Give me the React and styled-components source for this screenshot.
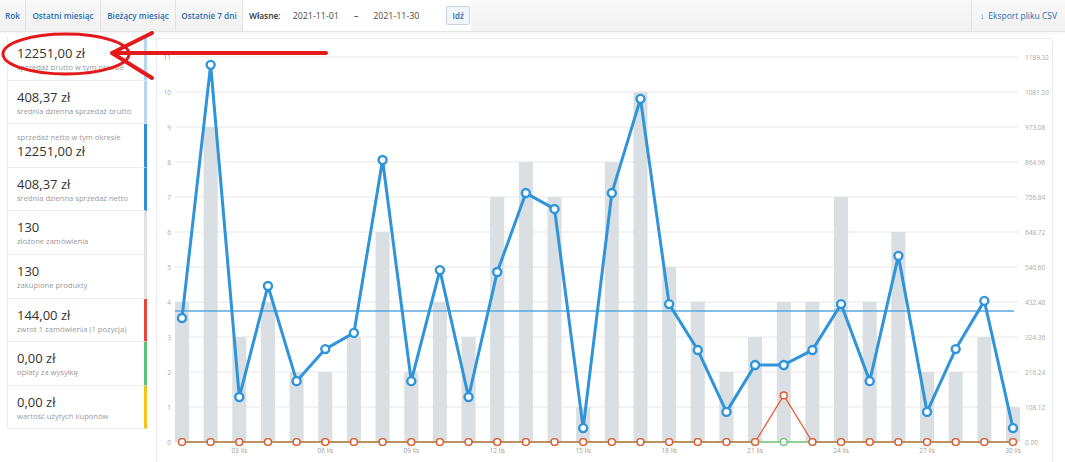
import styled, { createGlobalStyle } from "styled-components";

const GlobalStyle = createGlobalStyle`
  html, body {
    margin: 0;
    padding: 0;
    background: #fff;
    font-family: "Open Sans", "Liberation Sans", sans-serif;
  }
  * { box-sizing: border-box; }
`;

const Page = styled.div`
  position: relative;
  width: 1065px;
  height: 462px;
  overflow: hidden;
`;

const Toolbar = styled.div`
  display: flex;
  align-items: stretch;
  height: 32px;
  background: linear-gradient(#f9f9f9, #f1f1f1);
  border-bottom: 1px solid #e3e3e3;
  box-shadow: 0 1px 2px rgba(0, 0, 0, 0.05);
`;

const Tab = styled.button`
  display: flex;
  align-items: center;
  flex-shrink: 0;
  width: ${(p) => p.$w}px;
  justify-content: center;
  padding: 0;
  border: 0;
  border-right: 1px solid #e2e2e2;
  background: transparent;
  color: #2b6cb3;
  font-family: "Open Sans", sans-serif;
  font-size: 8.2px;
  font-weight: 600;
  white-space: nowrap;
  cursor: pointer;
`;

const Custom = styled.div`
  display: flex;
  align-items: center;
  flex-shrink: 0;
  width: 228px;
  padding: 0 6px;
  background: #fff;
  font-size: 8.4px;
  color: #444;
  white-space: nowrap;
`;

const CustomLabel = styled.span`
  font-weight: 600;
  color: #333;
  margin-right: 12px;
`;

const DateText = styled.span`
  color: #4a4a4a;
  font-size: 8.9px;
`;

const Dash = styled.span`
  margin: 0 15px 0 15px;
  font-weight: 600;
`;

const GoButton = styled.button`
  margin-left: 27px;
  height: 19px;
  padding: 0 5px;
  border: 1px solid #c5d3e2;
  border-radius: 2px;
  background: #f3f6f9;
  color: #2b6cb3;
  font-family: "Open Sans", sans-serif;
  font-size: 8px;
  font-weight: 600;
`;

const Spacer = styled.div`
  flex: 1;
`;

const Export = styled.div`
  display: flex;
  align-items: center;
  gap: 4px;
  padding-left: 8px;
  width: 94px;
  border-left: 1px solid #e2e2e2;
  color: #2b6cb3;
  font-size: 8.5px;
  white-space: nowrap;
`;

const Body = styled.div`
  display: flex;
  gap: 9px;
  padding: 5px 12px 0 7px;
  height: 430px;
`;

const Sidebar = styled.div`
  width: 140px;
  flex-shrink: 0;
  align-self: flex-start;
  border-left: 1px solid #ececec;
`;

const Card = styled.div`
  height: 43.6px;
  padding: 8px 0 0 9px;
  border-bottom: 1px solid #ececec;
  border-right: 3px solid ${(p) => p.$accent};
`;

const Value = styled.div`
  font-size: 13px;
  line-height: 17px;
  color: #333;
`;

const Label = styled.div`
  font-size: 7.6px;
  line-height: 11px;
  color: #9a9a9a;
  white-space: nowrap;
`;

const ChartPanel = styled.div`
  flex: 1;
  border: 1px solid #ebebeb;
  border-bottom: 0;
  margin-top: 1px;
  overflow: hidden;
`;

const Overlay = styled.svg`
  position: absolute;
  left: 0;
  top: 0;
  pointer-events: none;
`;

const cards = [
  { value: "12251,00 zł", label: "sprzedaż brutto w tym okresie", accent: "#b7d7ef" },
  { value: "408,37 zł", label: "średnia dzienna sprzedaż brutto", accent: "#b7d7ef" },
  { value: "12251,00 zł", label: "sprzedaż netto w tym okresie", accent: "#2f8fd9", top: true },
  { value: "408,37 zł", label: "średnia dzienna sprzedaż netto", accent: "#2f8fd9" },
  { value: "130", label: "złożone zamówienia", accent: "#dfe3e6" },
  { value: "130", label: "zakupione produkty", accent: "#dfe3e6" },
  { value: "144,00 zł", label: "zwrot 1 zamówienia (1 pozycja)", accent: "#e8463a" },
  { value: "0,00 zł", label: "opłaty za wysyłkę", accent: "#5cc27a" },
  { value: "0,00 zł", label: "wartość użytych kuponów", accent: "#f2c318" },
];

const orders = [4, 9, 3, 4, 2, 2, 3, 6, 2, 4, 3, 7, 8, 7, 1, 8, 10, 5, 4, 2, 3, 4, 4, 7, 4, 6, 2, 2, 3, 1];
const sales = [383, 1165, 139, 482, 188, 287, 337, 871, 188, 531, 139, 525, 769, 720, 43, 769, 1060, 426, 284, 93, 238, 238, 284, 426, 188, 575, 93, 287, 436, 43];
const refunds = orders.map((_, i) => (i === 21 ? 144 : 0));

const X0 = 180;
const DX = 28.655;
const Y0 = 441;
const STEP = 35;
const xOf = (i) => X0 + i * DX;
const yCount = (v) => Y0 - v * STEP;
const yMoney = (v) => Y0 - (v / 108.12) * STEP;

const Series = ({ values, color, width, r, sw }) => {
  const pts = values.map((v, i) => `${xOf(i)},${yMoney(v)}`).join(" ");
  return (
    <g>
      <polyline points={pts} fill="none" stroke={color} strokeWidth={width} strokeLinejoin="round" />
      {values.map((v, i) => (
        <circle key={i} cx={xOf(i)} cy={yMoney(v)} r={r} fill="#fff" stroke={color} strokeWidth={sw} />
      ))}
    </g>
  );
};

const Chart = () => (
  <svg width="898" height="424" viewBox="155 38 898 424">
    {Array.from({ length: 12 }, (_, k) => (
      <g key={k}>
        <line x1="173" x2="1016" y1={yCount(k)} y2={yCount(k)} stroke="#e7e7e7" strokeWidth="1" />
        <text x="169" y={yCount(k) + 2.5} fontSize="6.5" fill="#aaa" textAnchor="end" fontFamily="Open Sans">
          {k}
        </text>
        <text x="1023" y={yCount(k) + 2.5} fontSize="6.5" fill="#aaa" fontFamily="Open Sans">
          {(k * 108.12).toFixed(2)}
        </text>
      </g>
    ))}
    {orders.map((v, i) => (
      <rect key={i} x={xOf(i) - 7} y={yCount(v)} width="14" height={v * STEP} fill="#d9dfe2" />
    ))}
    <line x1="173" x2="1012" y1="310" y2="310" stroke="#58a8e0" strokeWidth="1.5" />
    {orders.map((_, i) =>
      (i + 1) % 3 === 0 ? (
        <text key={i} x={xOf(i)} y="452" fontSize="6.5" fill="#999" textAnchor="middle" fontFamily="Open Sans">
          {String(i + 1).padStart(2, "0")} lis
        </text>
      ) : null
    )}
    <Series values={orders.map(() => 0)} color="#6cc476" width={1.4} r={3.4} sw={1.4} />
    <Series values={refunds} color="#e8552f" width={1.2} r={3.4} sw={1.4} />
    <Series values={sales} color="#2f94d9" width={3} r={4} sw={2.4} />
  </svg>
);

const App = () => (
  <Page>
    <GlobalStyle />
    <Toolbar>
      <Tab $w={26}>Rok</Tab>
      <Tab $w={75}>Ostatni miesiąc</Tab>
      <Tab $w={75}>Bieżący miesiąc</Tab>
      <Tab $w={67}>Ostatnie 7 dni</Tab>
      <Custom>
        <CustomLabel>Własne:</CustomLabel>
        <DateText>2021-11-01</DateText>
        <Dash>–</Dash>
        <DateText>2021-11-30</DateText>
        <GoButton>Idź</GoButton>
      </Custom>
      <Spacer />
      <Export>
        <span>↓</span>
        <span>Eksport pliku CSV</span>
      </Export>
    </Toolbar>
    <Body>
      <Sidebar>
        {cards.map((c, i) => (
          <Card key={i} $accent={c.accent}>
            {c.top ? (
              <>
                <Label>{c.label}</Label>
                <Value>{c.value}</Value>
              </>
            ) : (
              <>
                <Value>{c.value}</Value>
                <Label>{c.label}</Label>
              </>
            )}
          </Card>
        ))}
      </Sidebar>
      <ChartPanel>
        <Chart />
      </ChartPanel>
    </Body>
    <Overlay width="1065" height="462">
      <ellipse cx="66" cy="54" rx="63" ry="20" fill="none" stroke="#e3191c" strokeWidth="3" />
      <line x1="113" y1="53" x2="326" y2="53" stroke="#e3191c" strokeWidth="4" strokeLinecap="round" />
      <polyline points="152,33 112,53 152,78" fill="none" stroke="#e3191c" strokeWidth="4" strokeLinecap="round" strokeLinejoin="round" />
    </Overlay>
  </Page>
);

export default App;
